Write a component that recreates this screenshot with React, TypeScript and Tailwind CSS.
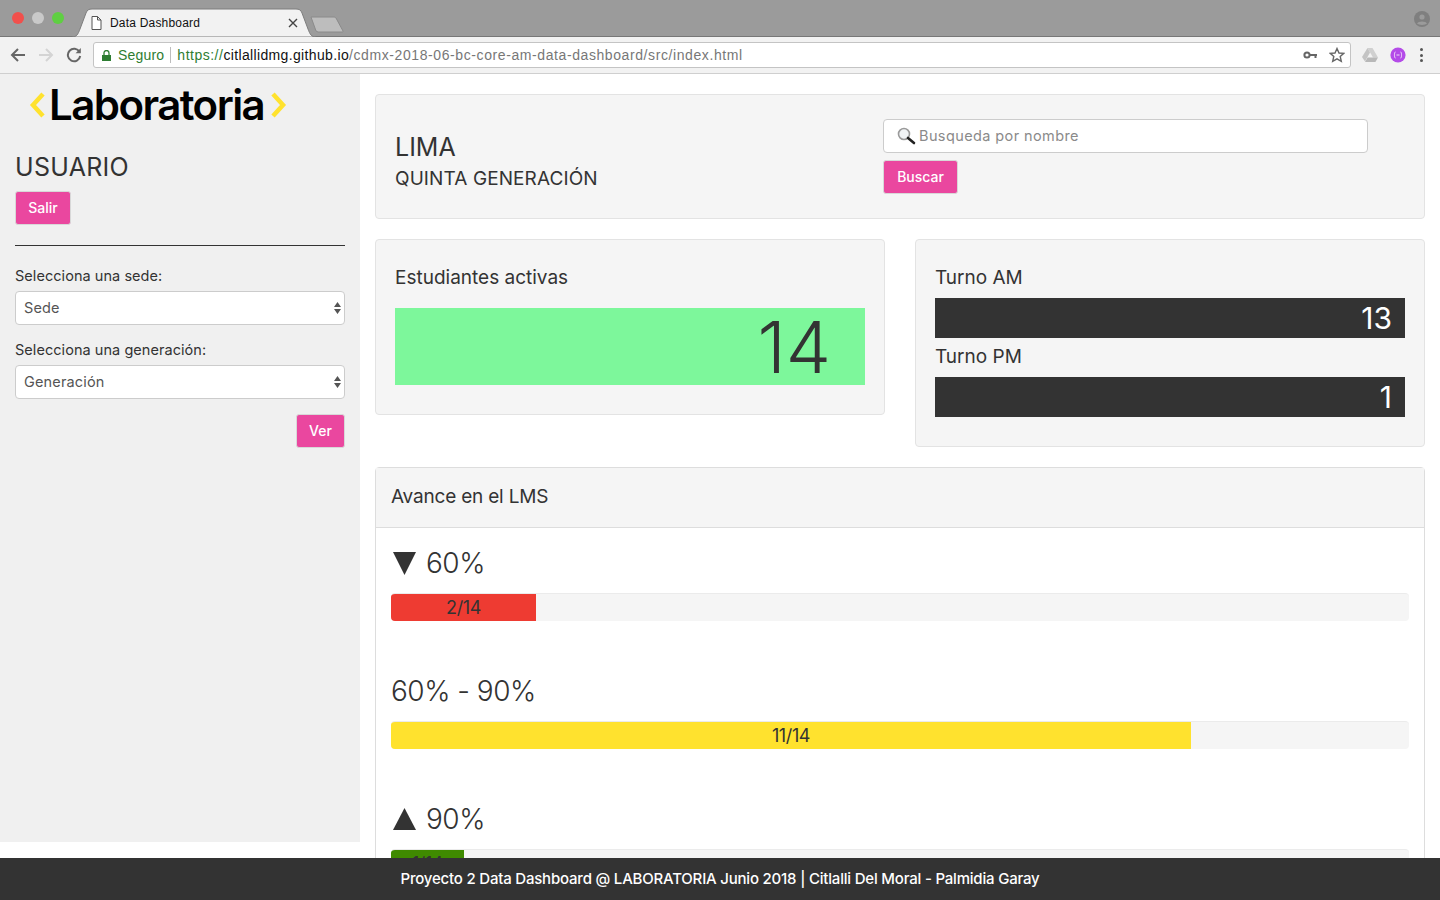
const font = { fontFamily: 'Inter, "Open Sans", sans-serif' };

function BrowserChrome() {
  return (
    <div className="h-[74px] shrink-0" style={{ fontFamily: '"Liberation Sans", Arial, sans-serif' }}>
      {/* Tab strip */}
      <div className="relative h-[37px] bg-[#9b9b9b] border-b border-[#777]">
        <div className="absolute left-[12px] top-[12px] flex gap-[8px]">
          <span className="w-3 h-3 rounded-full bg-[#f1504c]" />
          <span className="w-3 h-3 rounded-full bg-[#c9c9c9]" />
          <span className="w-3 h-3 rounded-full bg-[#5fcf42]" />
        </div>
        <svg className="absolute left-[70px] top-[8px]" width="250" height="29" viewBox="0 0 250 29">
          <path d="M2 29 C7 29 8 26 10 21 L16 5 C17 2 19 1 22 1 L226 1 C229 1 231 2 232 5 L238 21 C240 26 241 29 246 29 Z" fill="#f2f2f2" stroke="#7d7d7d" />
        </svg>
        <svg className="absolute left-[309px] top-[16px]" width="36" height="17" viewBox="0 0 36 17">
          <path d="M2 1 L25 1 C26 1 27 2 27 2 L34 15 C34 16 34 16 33 16 L9 16 C8 16 8 15 7 15 Z" fill="#bdbdbd" stroke="#8a8a8a" />
        </svg>
        <svg className="absolute left-[91px] top-[16px]" width="11" height="14" viewBox="0 0 11 14" fill="#fff" stroke="#555">
          <path d="M1 .5 H6.5 L10 4 V13.5 H1 Z M6.5 .5 V4 H10" />
        </svg>
        <span className="absolute left-[110px] top-[16px] text-[12px] leading-[15px] text-[#111] tracking-[0.2px]">Data Dashboard</span>
        <svg className="absolute left-[288px] top-[18px]" width="10" height="10" viewBox="0 0 10 10" stroke="#444" strokeWidth="1.4">
          <path d="M1 1 L9 9 M9 1 L1 9" />
        </svg>
        <svg className="absolute left-[1414px] top-[11px]" width="16" height="16" viewBox="0 0 16 16">
          <circle cx="8" cy="8" r="8" fill="#7f7f7f" />
          <circle cx="8" cy="6" r="2.6" fill="#9b9b9b" />
          <path d="M3 12.6 C4 9.8 12 9.8 13 12.6 C11 14.4 5 14.4 3 12.6 Z" fill="#9b9b9b" />
        </svg>
      </div>
      {/* Toolbar */}
      <div className="relative flex items-center h-[37px] bg-[#f2f2f2] border-b border-[#cfcfcf]">
        <svg className="absolute left-[10px] top-[10px]" width="16" height="16" viewBox="0 0 16 16" fill="none" stroke="#666" strokeWidth="2">
          <path d="M15 8 H2 M8 2 L2 8 L8 14" />
        </svg>
        <svg className="absolute left-[38px] top-[10px]" width="16" height="16" viewBox="0 0 16 16" fill="none" stroke="#d4d4d4" strokeWidth="2">
          <path d="M1 8 H14 M8 2 L14 8 L8 14" />
        </svg>
        <svg className="absolute left-[66px] top-[10px]" width="16" height="16" viewBox="0 0 16 16" fill="none" stroke="#666" strokeWidth="2">
          <path d="M13.5 5 A6.2 6.2 0 1 0 14.2 9" />
          <path d="M14.8 1 V6.2 H9.6 Z" fill="#666" stroke="none" />
        </svg>
        <div className="ml-[93px] flex items-center w-[1258px] h-[26px] bg-white border border-[#c4c4c4] rounded-[3px] text-[14px]">
          <svg className="ml-[8px]" width="9" height="11" viewBox="0 0 9 11" fill="#2e7d32">
            <path d="M0 5 H9 V11 H0 Z" />
            <path d="M2 5 V3 A2.5 2.5 0 0 1 7 3 V5" fill="none" stroke="#2e7d32" strokeWidth="1.3" />
          </svg>
          <span className="ml-[7px] text-[#2e7d32] tracking-[0.2px]">Seguro</span>
          <span className="mx-[6px] w-px h-[16px] bg-[#bdbdbd]" />
          <span className="text-[#2e7d32] tracking-[0.5px]">https://</span>
          <span className="text-[#111] tracking-[0.35px]">citlallidmg.github.io</span>
          <span className="text-[#777] tracking-[0.59px]">/cdmx-2018-06-bc-core-am-data-dashboard/src/index.html</span>
        </div>
        <svg className="absolute left-[1303px] top-[13px]" width="15" height="10" viewBox="0 0 15 10" fill="none" stroke="#666" strokeWidth="2">
          <circle cx="4" cy="5" r="2.6" />
          <path d="M7 5 H14 M12.5 5 V8" />
        </svg>
        <svg className="absolute left-[1329px] top-[10px]" width="16" height="16" viewBox="0 0 16 16" fill="none" stroke="#666" strokeWidth="1.4">
          <path d="M8 1.5 L10 6 L14.8 6.4 L11.2 9.5 L12.3 14.3 L8 11.8 L3.7 14.3 L4.8 9.5 L1.2 6.4 L6 6 Z" />
        </svg>
        <svg className="absolute left-[1362px] top-[11px]" width="16" height="14" viewBox="0 0 16 14">
          <path d="M5.5 0 H10.5 L16 9.5 H11 Z" fill="#d0d0d0" />
          <path d="M5.5 0 L8 4.5 L3 13.5 L0 9 Z" fill="#c4c4c4" />
          <path d="M3 14 L5.6 9.5 H16 L13.4 14 Z" fill="#b8b8b8" />
        </svg>
        <svg className="absolute left-[1390px] top-[10px]" width="16" height="16" viewBox="0 0 16 16">
          <circle cx="8" cy="8" r="7.6" fill="#b44be8" />
          <path d="M5.5 5 C4 5 5 8 4 8 C5 8 4 11 5.5 11 M10.5 5 C12 5 11 8 12 8 C11 8 12 11 10.5 11 M6.5 8 H9.5" fill="none" stroke="#fff" strokeWidth="0.8" />
        </svg>
        <div className="absolute left-[1420px] top-[11px] flex flex-col gap-[2.5px]">
          <span className="w-[3px] h-[3px] rounded-full bg-[#555]" />
          <span className="w-[3px] h-[3px] rounded-full bg-[#555]" />
          <span className="w-[3px] h-[3px] rounded-full bg-[#555]" />
        </div>
      </div>
    </div>
  );
}

function PinkButton({ children, className = '' }: { children: string; className?: string }) {
  return (
    <button className={`h-[34px] pb-[2px] bg-[#ea479f] border border-[#d8d8d8] rounded-[3px] text-white text-[14px] font-medium ${className}`}>
      {children}
    </button>
  );
}

function SelectBox({ label, value }: { label: string; value: string }) {
  return (
    <div>
      <p className="text-[14.5px] leading-[20px] text-[#333] tracking-[0.05px]">{label}</p>
      <div className="mt-[5px] flex items-center justify-between h-[34px] pl-[8px] pr-[3px] bg-white border border-[#ccc] rounded-[4px] text-[14.5px] text-[#555] tracking-[0.15px]">
        {value}
        <svg width="7" height="14" viewBox="0 0 7 14" fill="#555">
          <path d="M3.5 1 L7 6 H0 Z M3.5 13 L0 8 H7 Z" />
        </svg>
      </div>
    </div>
  );
}

function Sidebar() {
  return (
    <aside className="w-[360px] h-[768px] shrink-0 bg-[#f0f0f0] pl-[15px] pr-[15px]">
      <div className="flex items-center h-[62px] pl-[14px]">
        <svg width="17" height="26" viewBox="0 0 17 26" fill="none" stroke="#ffe22e" strokeWidth="4.5">
          <path d="M14 2 L4 13 L14 24" />
        </svg>
        <span className="ml-[3px] text-[42px] leading-[62px] font-semibold text-black tracking-[-1.55px]">Laboratoria</span>
        <svg className="ml-[6px]" width="17" height="26" viewBox="0 0 17 26" fill="none" stroke="#ffe22e" strokeWidth="4.5">
          <path d="M3 2 L13 13 L3 24" />
        </svg>
      </div>
      <h2 className="mt-[15px] text-[25px] leading-[32px] text-[#333] tracking-[0.3px]">USUARIO</h2>
      <PinkButton className="mt-[8px] w-[56px] block">Salir</PinkButton>
      <hr className="mt-[20px] border-t border-[#333]" />
      <div className="mt-[20px]">
        <SelectBox label="Selecciona una sede:" value="Sede" />
      </div>
      <div className="mt-[15px]">
        <SelectBox label="Selecciona una generación:" value="Generación" />
      </div>
      <div className="mt-[15px] flex justify-end">
        <PinkButton className="w-[49px]">Ver</PinkButton>
      </div>
    </aside>
  );
}

function Well({ children, className = '' }: { children: React.ReactNode; className?: string }) {
  return <div className={`bg-[#f5f5f5] border border-[#e3e3e3] rounded-[4px] ${className}`}>{children}</div>;
}

function DarkBar({ value }: { value: string }) {
  return (
    <div className="flex items-center justify-end h-[40px] pr-[13px] bg-[#333] text-white text-[30px] font-normal">
      {value}
    </div>
  );
}

function Progress({ label, arrow, filled, text, color }: { label: string; arrow?: 'up' | 'down'; filled: number; text: string; color: string }) {
  return (
    <div className="h-[128px]">
      <div className="flex items-center h-[34px] text-[28px] leading-[34px] text-[#333] font-light tracking-[-0.5px]">
        {arrow && (
          <svg className="ml-[2px] mr-[10px]" width="23" height="23" viewBox="0 0 23 23" fill="#333">
            <path d={arrow === 'down' ? 'M0 0 H23 L11.5 23 Z' : 'M11.5 0 L23 22 H0 Z'} />
          </svg>
        )}
        {label}
      </div>
      <div className="mt-[13px] h-[28px] bg-[#f5f5f5] rounded-[4px] overflow-hidden border-t border-[#ebebeb]">
        <div
          className="h-[28px] -mt-px flex items-center justify-center text-[18px] text-[#333] tracking-[-0.4px]"
          style={{ width: filled, backgroundColor: color }}
        >
          {text}
        </div>
      </div>
    </div>
  );
}

export default function App() {
  return (
    <div className="relative w-[1440px] h-[900px] overflow-hidden bg-white" style={font}>
      <BrowserChrome />
      <div className="flex h-[826px]">
        <Sidebar />
        <main className="flex-1 pl-[15px] pr-[15px] pt-[20px] overflow-hidden">
          {/* Header */}
          <Well className="flex h-[125px] pl-[19px]">
            <div className="w-[488px] pt-[36px]">
              <h1 className="text-[25px] leading-[32px] text-[#333]">LIMA</h1>
              <h2 className="text-[19px] leading-[32px] text-[#333] tracking-[0.1px]">QUINTA GENERACIÓN</h2>
            </div>
            <div className="pt-[24px]">
              <div className="flex items-center w-[485px] h-[34px] pl-[13px] bg-white border border-[#ccc] rounded-[4px] text-[14.5px] text-[#8a8a8a] tracking-[0.4px]">
                <svg className="mr-[3px]" width="19" height="18" viewBox="0 0 19 18" fill="none">
                  <circle cx="7" cy="7" r="5.5" fill="#f0f3f5" stroke="#9a9a9a" strokeWidth="1.6" />
                  <path d="M11 11 L17 16" stroke="#222" strokeWidth="2.6" strokeLinecap="round" />
                </svg>
                Busqueda por nombre
              </div>
              <PinkButton className="mt-[7px] w-[75px] block">Buscar</PinkButton>
            </div>
          </Well>

          {/* Stats */}
          <div className="mt-[20px] flex items-start gap-[30px]">
            <Well className="w-[510px] h-[176px] px-[19px] pt-[22px]">
              <p className="text-[19px] leading-[32px] text-[#333]">Estudiantes activas</p>
              <div className="mt-[14px] flex items-center justify-end h-[77px] pr-[34px] bg-[#7df79b] text-[72px] font-light text-[#333]">
                14
              </div>
            </Well>
            <Well className="w-[510px] h-[208px] px-[19px] pt-[22px]">
              <p className="text-[19px] leading-[32px] text-[#333]">Turno AM</p>
              <div className="mt-[4px]">
                <DarkBar value="13" />
              </div>
              <p className="mt-[3px] text-[19px] leading-[32px] text-[#333]">Turno PM</p>
              <div className="mt-[4px]">
                <DarkBar value="1" />
              </div>
            </Well>
          </div>

          {/* LMS progress */}
          <div className="mt-[20px] border border-[#ddd] rounded-t-[4px]">
            <div className="flex items-center h-[60px] pl-[15px] bg-[#f5f5f5] border-b border-[#ddd] text-[19px] text-[#333] tracking-[-0.2px]">
              Avance en el LMS
            </div>
            <div className="px-[15px] pt-[18px]">
              <Progress label="60%" arrow="down" filled={145} text="2/14" color="#ee3b32" />
              <Progress label="60% - 90%" filled={800} text="11/14" color="#ffe22e" />
              <Progress label="90%" arrow="up" filled={73} text="1/14" color="#3f8a00" />
            </div>
          </div>
        </main>
      </div>
      <footer className="absolute left-0 right-0 bottom-0 h-[42px] flex items-center justify-center bg-[#333] text-white text-[15px] font-medium tracking-[-0.2px]">
        Proyecto 2 Data Dashboard @ LABORATORIA Junio 2018 | Citlalli Del Moral - Palmidia Garay
      </footer>
    </div>
  );
}
